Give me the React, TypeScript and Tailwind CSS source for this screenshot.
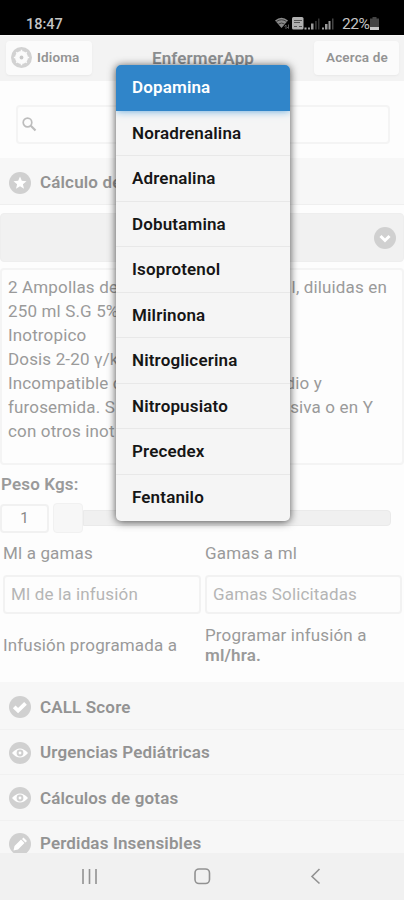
import type { ReactNode } from "react";

const drogas = [
  "Dopamina",
  "Noradrenalina",
  "Adrenalina",
  "Dobutamina",
  "Isoprotenol",
  "Milrinona",
  "Nitroglicerina",
  "Nitropusiato",
  "Precedex",
  "Fentanilo",
];

// inicio y final de cada renglón, el menú abierto queda encima
const indicaciones = [
  { inicio: "2 Ampollas de", final: "l, diluidas en", margen: "pr-[15px]" },
  { inicio: "250 ml S.G 5%", final: "", margen: "" },
  { inicio: "Inotropico", final: "", margen: "" },
  { inicio: "Dosis 2-20 γ/k", final: "", margen: "" },
  { inicio: "Incompatible c", final: "dio y", margen: "pr-[80px]" },
  { inicio: "furosemida. S", final: "siva o en Y", margen: "pr-[29px]" },
  { inicio: "con otros inot", final: "", margen: "" },
];

function Disc({ children }: { children: ReactNode }) {
  return (
    <svg viewBox="0 0 22 22" className="size-[22px] shrink-0">
      <circle cx="11" cy="11" r="11" fill="#d0d0d0" />
      {children}
    </svg>
  );
}

function StarIcon() {
  return (
    <Disc>
      <path
        d="M11 4.5l1.8 4.3 4.7.4-3.6 3 1.1 4.6-4-2.5-4 2.5 1.1-4.6-3.6-3 4.7-.4z"
        fill="#fff"
      />
    </Disc>
  );
}

function CheckIcon() {
  return (
    <Disc>
      <path d="M5.2 10.8l3.9 3.8 7.4-7.2" fill="none" stroke="#fff" strokeWidth="3.8" />
    </Disc>
  );
}

function EyeIcon() {
  return (
    <Disc>
      <path d="M3 11Q11 1.8 19 11Q11 20.2 3 11z" fill="#fff" />
      <circle cx="11" cy="11" r="3.4" fill="#d0d0d0" />
      <circle cx="11" cy="11" r="1.4" fill="#fff" />
    </Disc>
  );
}

function PencilIcon() {
  return (
    <Disc>
      <path d="M4.5 17.5l1-4.5 6.5-6.5 3.5 3.5L9 16.5zM13 6l1.5-1.5L18 8l-1.5 1.5z" fill="#fff" />
    </Disc>
  );
}

const secciones = [
  { titulo: "CALL Score", icono: <CheckIcon /> },
  { titulo: "Urgencias Pediátricas", icono: <EyeIcon /> },
  { titulo: "Cálculos de gotas", icono: <EyeIcon /> },
  { titulo: "Perdidas Insensibles", icono: <PencilIcon /> },
];

function StatusBar() {
  return (
    <div className="flex h-[35px] shrink-0 items-end bg-black pb-[2px] pl-[26px] leading-[17px] tracking-normal text-[#c4c4c4]">
      <span className="w-[249px] shrink-0 text-[14.5px] font-medium">18:47</span>
      <svg viewBox="0 0 62 17" className="h-[17px] w-[62px] shrink-0">
        <path d="M0 4.5Q6.5 -1 13 4.5L6.5 12z" fill="#8a8a8a" />
        <path d="M1.5 5.5q5-3.5 10 0M3.5 8q3-2 6 0" fill="none" stroke="#2a2a2a" strokeWidth="0.8" />
        <path d="M9.5 10.5l1.5-1.5v4m2.5-4.5v4l-1.5-1.5" fill="none" stroke="#5c5c5c" />
        <rect x="17" y="1" width="11.5" height="12.5" rx="1.5" fill="#b0b0b0" />
        <path d="M19 4.5h8M19 6.5h6M19 10.5h3m2 0h3" stroke="#555" />
        <path d="M29.5 11.5h2v2h-2z" fill="#aaa" />
        <path d="M33 13.5v-2h2v2zm3 0V7.5h2.5v6z" fill="#9a9a9a" />
        <path d="M40 13.5V5h1.8v8.5zm3 0V2.5h1.5v11z" fill="#333" />
        <path d="M47 13.5v-2h2v2zm3 0V8h2.5v5.5zm3.5 0V5h2v8.5z" fill="#9a9a9a" />
        <path d="M57 13.5V2.5h1.5v11z" fill="#444" />
      </svg>
      <span className="ml-[5px] w-[28px] shrink-0 text-[15.5px] tracking-[-0.4px]">22%</span>
      <svg viewBox="0 0 9 13" className="mb-[3px] h-[13px] w-[9px] shrink-0">
        <path d="M2.5 0h4v1.5H9V13H0V1.5h2.5z" fill="#444" />
        <path d="M0 10h9v3H0z" fill="#c9c9c9" />
      </svg>
    </div>
  );
}

function Header() {
  return (
    <header className="flex h-[46px] shrink-0 items-start justify-between border-t border-[#fafafa] bg-[#f3f3f3] pt-[5px] pr-[5px] pl-[6px] text-[#949494]">
      <button className="flex h-[34px] w-[86px] items-center gap-[5px] rounded-[4px] bg-[#fbfbfb] pb-px pl-[5px] text-[13.5px] font-semibold shadow-[0_1px_2px_#e8e8e8]">
        <svg viewBox="0 0 22 22" className="size-[21px]">
          <circle cx="11" cy="11" r="11" fill="#d2d2d2" />
          <circle cx="11" cy="11" r="6.8" fill="#fbfbfb" />
          <path
            d="M11 3v3M11 16v3M3 11h3M16 11h3M5.5 5.5l1.5 1.5M15 15l1.5 1.5M5.5 16.5l1.5-1.5M15 7l1.5-1.5"
            stroke="#fbfbfb"
            strokeWidth="1.6"
          />
          <circle cx="11" cy="11" r="2" fill="#c8c8c8" />
        </svg>
        Idioma
      </button>
      <h1 className="pt-[7px] text-[17px] leading-[20px] font-semibold text-[#8b8e90]">EnfermerApp</h1>
      <button className="h-[34px] w-[85px] rounded-[4px] bg-[#fbfbfb] pb-px pl-px text-[13.5px] font-semibold shadow-[0_1px_2px_#e8e8e8]">
        Acerca de
      </button>
    </header>
  );
}

function DrugMenu() {
  return (
    <ul className="absolute top-[65px] left-[116px] w-[174px] overflow-hidden rounded-[5px] bg-[#f5f5f5] text-[17px] font-semibold text-[#161616] shadow-[0_1px_9px_rgba(0,0,0,0.7)]">
      {drogas.map((droga, i) => (
        <li
          key={droga}
          className={
            i === 0
              ? "relative flex h-[45.5px] items-center bg-[#3085c9] px-4 text-white shadow-[0_0_8px_#5da6dc]"
              : "flex h-[45.5px] items-center border-b border-[#e8e8e8] px-4 pt-px last:h-[46px] last:border-b-0"
          }
        >
          {droga}
        </li>
      ))}
    </ul>
  );
}

function NavBar() {
  return (
    <nav className="flex h-[47px] shrink-0 items-center bg-[#f1f1f1]">
      <svg viewBox="0 0 404 47" className="h-[47px] w-[404px]" fill="none" stroke="#929292" strokeWidth="1.6">
        <path d="M83 16v15M89.5 16v15M96 16v15" />
        <rect x="195" y="16" width="14.5" height="14.5" rx="4" />
        <path d="M319.5 16l-7.5 7.5 7.5 7" />
      </svg>
    </nav>
  );
}

export default function App() {
  return (
    <div className="relative flex h-[900px] w-[404px] flex-col overflow-hidden bg-[#fdfdfd] font-['Roboto','Liberation_Sans',sans-serif] tracking-[0.15px] text-[#9a9a9a]">
      <StatusBar />
      <Header />

      <main className="flex min-h-0 flex-1 flex-col overflow-hidden">
        <div className="mt-[24px] mr-[14px] ml-[16px] flex h-[39px] shrink-0 items-center rounded-[4px] border-2 border-[#f4f4f4] pl-[4px]">
          <svg viewBox="0 0 15 15" className="size-[15px]" fill="none" stroke="#bdbdbd">
            <circle cx="5.5" cy="5.5" r="4.3" strokeWidth="1.7" />
            <path d="M8.8 8.8l4.7 4.7" strokeWidth="2.2" />
          </svg>
        </div>

        <div className="mt-[14px] flex h-[47px] shrink-0 items-center gap-[9px] border-b border-[#efefef] bg-[#f7f7f7] pt-[3px] pl-[9px] text-[17px] font-semibold text-[#939393]">
          <StarIcon />
          Cálculo de
        </div>

        <div className="mt-[8px] flex h-[49px] shrink-0 items-center justify-end rounded-[4px] border border-[#eeeeee] bg-[#f1f1f1] pr-[7px]">
          <Disc>
            <path d="M6.5 9l4.5 4.5L15.5 9" fill="none" stroke="#fff" strokeWidth="3" />
          </Disc>
        </div>

        <div className="mt-[6px] h-[197px] shrink-0 rounded-[4px] border-2 border-[#f4f4f4] pt-[5px] pl-[6px] text-[17px] leading-[24px] whitespace-nowrap">
          {indicaciones.map(({ inicio, final, margen }) => (
            <p key={inicio} className={`flex justify-between ${margen}`}>
              <span>{inicio}</span>
              <span>{final}</span>
            </p>
          ))}
        </div>

        <p className="mt-[9px] h-[20px] shrink-0 pl-px text-[17px] leading-[20px] font-semibold">Peso Kgs:</p>

        <div className="mt-[9px] flex h-[30px] shrink-0 items-center">
          <span className="flex h-[29px] w-[49px] items-center justify-center rounded-[4px] border-2 border-[#f1f1f1] text-[15px] text-[#888]">
            1
          </span>
          <div className="ml-[4px] flex flex-1 items-center">
            <span className="h-[30px] w-[30px] rounded-[4px] border border-[#f1f1f1] bg-[#f7f7f7]" />
            <span className="mr-[13px] h-[16px] flex-1 rounded-r-[4px] border border-[#eaeaea] bg-[#f0f0f0]" />
          </div>
        </div>

        <div className="mt-[10px] grid shrink-0 grid-cols-2 text-[17px] leading-[20px]">
          <div className="pl-[3px]">
            <p>Ml a gamas</p>
            <div className="mt-[12px] flex h-[39px] w-[198px] items-center rounded-[4px] border-2 border-[#f2f2f2] pb-[2px] pl-[6px] text-[#b5b5b5]">
              Ml de la infusión
            </div>
            <p className="mt-[21px]">Infusión programada a</p>
          </div>
          <div className="pl-[3px]">
            <p>Gamas a ml</p>
            <div className="mt-[12px] flex h-[39px] w-[197px] items-center rounded-[4px] border-2 border-[#f2f2f2] pb-[2px] pl-[6px] text-[#b5b5b5]">
              Gamas Solicitadas
            </div>
            <p className="mt-[11px]">
              Programar infusión a<br />
              <strong className="font-semibold">ml/hra.</strong>
            </p>
          </div>
        </div>

        <ul className="mt-[17px] shrink-0 bg-[#f7f7f7] pt-[2px] text-[17px] font-semibold text-[#939393]">
          {secciones.map(({ titulo, icono }) => (
            <li
              key={titulo}
              className="flex h-[45.5px] items-center gap-[9px] border-b border-[#f1f1f1] pt-[2px] pl-[9px]"
            >
              {icono}
              {titulo}
            </li>
          ))}
        </ul>
      </main>

      <NavBar />
      <DrugMenu />
    </div>
  );
}
